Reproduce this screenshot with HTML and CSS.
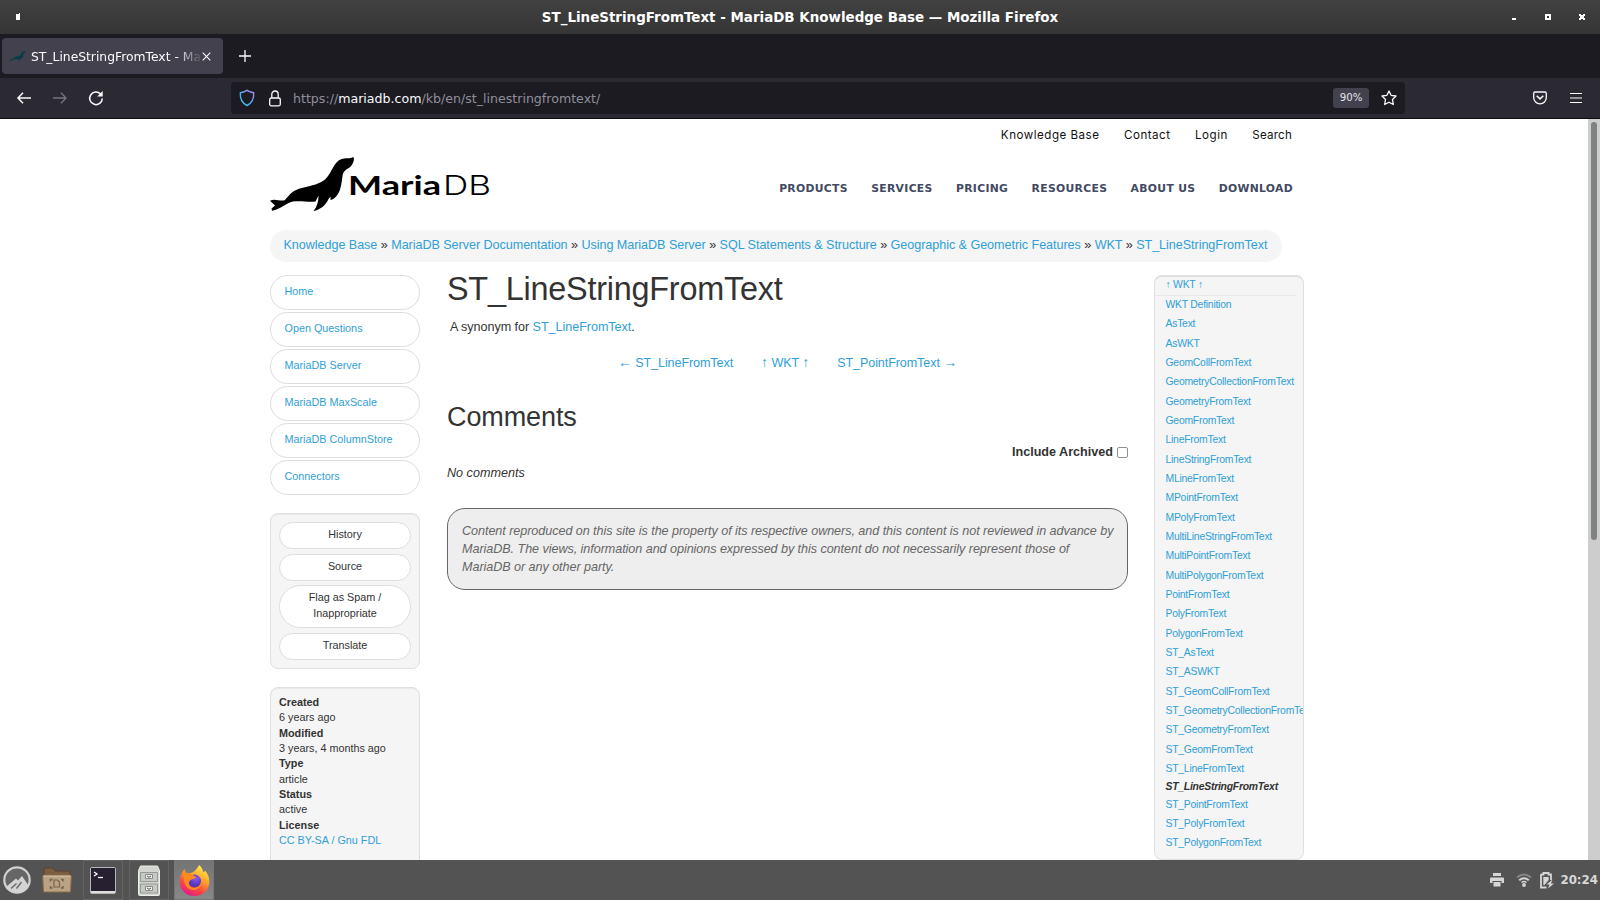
FILE: index.html
```html
<!DOCTYPE html>
<html lang="en">
<head>
<meta charset="utf-8">
<title>ST_LineStringFromText - MariaDB Knowledge Base</title>
<link rel="stylesheet" href="styles.css">
</head>
<body>
<div class="titlebar">
  <svg class="win-mark" width="6" height="10" viewBox="0 0 6 10"><path d="M0 2h3V1h1v7H0z" fill="#fff"/></svg>
  <span class="win-title">ST_LineStringFromText - MariaDB Knowledge Base — Mozilla Firefox</span>
  <svg class="win-buttons" width="73" height="8" viewBox="0 0 73 8"><path d="M0 5h4v2H0zM33 1h6v6h-6zM67 1h2v1h2V1h2v2h-1v2h1v2h-2V6h-2v1h-2V5h1V3h-1z" fill="#fff"/><path d="M35 3h2v2h-2z" fill="#3a3a3a"/></svg>
</div>
<div class="tabs">
  <div class="tab">
    <svg class="favicon" width="16" height="12" viewBox="0 0 87 56"><use href="#seal" fill="#0a3a4a"/></svg>
    <span class="tab-text">ST_LineStringFromText - MariaDB Kn</span>
    <svg width="9" height="9" viewBox="0 0 9 9"><path d="M.7.7l7.6 7.6M8.3.7L.7 8.3" stroke="#fbfbfe" stroke-width="1.1"/></svg>
  </div>
  <svg class="plus" width="12" height="12" viewBox="0 0 12 12"><path d="M6 0v12M0 6h12" stroke="#fbfbfe" stroke-width="1.3"/></svg>
</div>
<div class="toolbar">
  <svg class="back" width="14" height="12" viewBox="0 0 14 12"><path d="M14 6H1M6 .8L1 6l5 5.2" fill="none" stroke="#fbfbfe" stroke-width="1.5"/></svg>
  <svg class="fwd" width="14" height="12" viewBox="0 0 14 12"><path d="M0 6h13M8 .8L13 6l-5 5.2" fill="none" stroke="#77767f" stroke-width="1.3"/></svg>
  <svg class="reload" width="16" height="16" viewBox="0 0 16 16"><path d="M12.6 4A6.3 6.3 0 1 0 14.3 8.500" fill="none" stroke="#fbfbfe" stroke-width="1.5"/><path d="M14.700 1v5.500H9.200z" fill="#fbfbfe"/></svg>
  <div class="url">
    <svg width="16" height="18" viewBox="0 0 16 18"><defs><linearGradient id="sh" x1="1" y1="0" x2="0" y2="1"><stop offset="0" stop-color="#b088ee"/><stop offset=".5" stop-color="#5ba4e8"/><stop offset="1" stop-color="#1fd5f5"/></linearGradient></defs><path d="M8 1.200C6.500 2.700 3.500 3.400 1.300 3.800C1 9.500 2.400 14 8 16.500C13.600 14 15 9.500 14.700 3.800C12.500 3.400 9.500 2.700 8 1.200z" fill="none" stroke="url(#sh)" stroke-width="1.400"/></svg>
    <svg class="lock" width="12" height="17" viewBox="0 0 12 17"><rect x=".7" y="8" width="10.600" height="7.800" rx="1.500" fill="none" stroke="#fbfbfe" stroke-width="1.300"/><path d="M2.800 7.800V4.200a3.200 3.200 0 0 1 6.400 0v3.600" fill="none" stroke="#fbfbfe" stroke-width="1.300"/></svg>
    <span class="addr">https://<b>mariadb.com</b>/kb/en/st_linestringfromtext/</span>
    <span class="zoom">90%</span>
    <svg class="star" width="16" height="16" viewBox="0 0 16 16"><path d="M8 1l2.100 4.300 4.900.7-3.500 3.500.8 5L8 12.200 3.700 14.500l.8-5L1 6l4.900-.7z" fill="none" stroke="#fbfbfe" stroke-width="1.300" stroke-linejoin="round"/></svg>
  </div>
  <svg class="pocket" width="14" height="14" viewBox="0 0 14 14"><path d="M2 1h10q1.300 0 1.300 1.300V6.500a6.300 6.300 0 0 1-12.600 0V2.300Q.7 1 2 1z" fill="none" stroke="#fbfbfe" stroke-width="1.300"/><path d="M3.700 4.700L7 7.900l3.300-3.200" fill="none" stroke="#fbfbfe" stroke-width="1.500"/></svg>
  <svg class="menu" width="12" height="10" viewBox="0 0 12 10"><path d="M0 .5h12M0 5h12M0 9.500h12" stroke="#fbfbfe" stroke-width="1.2"/></svg>
</div>
<div class="viewport">
  <div class="page">
    <div class="topnav"><span>Knowledge Base</span><span>Contact</span><span>Login</span><span class="tight">Search</span></div>
    <div class="header">
      <svg class="logo" width="220" height="56" viewBox="0 0 220 56">
        <defs><path id="seal" d="M83.300 1C85 3 83 9 79.500 11.500C75 14 73 16 72.500 20C71.500 28 70.500 34 68 38C65.500 41.500 63 44 60.500 44L60.500 40.500L58.500 43C56 49 50 54 43.500 55C47 51 48.500 45.500 48.500 39.500L45.500 45.500C40 46.500 30 44.500 23 45.500C16 47 11 53 2 54.800L1.500 52.500L5 49.500L0 44.800C5 42 11 46 15 44C20 38 23 34 32 32C42 29.500 50 28 56 22.500C62 16 64 6 71 3.200C76 1.500 80 3 83.300 1z"/></defs>
        <use href="#seal" fill="#000"/>
        <text x="78" y="39" class="maria" textLength="93" lengthAdjust="spacingAndGlyphs">Maria</text>
        <text x="173" y="39" class="db" textLength="48" lengthAdjust="spacingAndGlyphs">DB</text>
      </svg>
      <div class="nav"><span>PRODUCTS</span><span>SERVICES</span><span>PRICING</span><span>RESOURCES</span><span>ABOUT US</span><span>DOWNLOAD</span></div>
    </div>
    <div class="crumbs"><a>Knowledge Base</a> » <a>MariaDB Server Documentation</a> » <a>Using MariaDB Server</a> » <a>SQL Statements &amp; Structure</a> » <a>Geographic &amp; Geometric Features</a> » <a>WKT</a> » <a>ST_LineStringFromText</a></div>
    <div class="columns">
      <div class="left">
        <div class="pills"><a>Home</a><a>Open Questions</a><a>MariaDB Server</a><a>MariaDB MaxScale</a><a>MariaDB ColumnStore</a><a>Connectors</a></div>
        <div class="panel actions"><span>History</span><span>Source</span><span class="two">Flag as Spam /<br>Inappropriate</span><span>Translate</span></div>
        <div class="panel info"><b>Created</b><span>6 years ago</span><b>Modified</b><span>3 years, 4 months ago</span><b>Type</b><span>article</span><b>Status</b><span>active</span><b>License</b><a>CC BY-SA / Gnu FDL</a></div>
      </div>
      <div class="main">
        <h1>ST_LineStringFromText</h1>
        <p class="syn">A synonym for <a>ST_LineFromText</a>.</p>
        <div class="pager"><a><i>←</i> ST_LineFromText</a><a><i>↑</i> WKT <i>↑</i></a><a>ST_PointFromText <i>→</i></a></div>
        <h2>Comments</h2>
        <div class="archived"><b>Include Archived</b><i class="check"></i></div>
        <p class="none">No comments</p>
        <div class="notice"><span>Content reproduced on this site is the property of its respective owners, and this content is not reviewed in advance by</span><span>MariaDB. The views, information and opinions expressed by this content do not necessarily represent those of</span><span>MariaDB or any other party.</span></div>
      </div>
      <div class="right">
        <a class="up">↑ WKT ↑</a>
        <a>WKT Definition</a><a>AsText</a><a>AsWKT</a><a>GeomCollFromText</a><a>GeometryCollectionFromText</a><a>GeometryFromText</a><a>GeomFromText</a><a>LineFromText</a><a>LineStringFromText</a><a>MLineFromText</a><a>MPointFromText</a><a>MPolyFromText</a><a>MultiLineStringFromText</a><a>MultiPointFromText</a><a>MultiPolygonFromText</a><a>PointFromText</a><a>PolyFromText</a><a>PolygonFromText</a><a>ST_AsText</a><a>ST_ASWKT</a><a>ST_GeomCollFromText</a><a>ST_GeometryCollectionFromText</a><a>ST_GeometryFromText</a><a>ST_GeomFromText</a><a>ST_LineFromText</a><b>ST_LineStringFromText</b><a>ST_PointFromText</a><a>ST_PolyFromText</a><a>ST_PolygonFromText</a>
      </div>
    </div>
  </div>
  <div class="scroll"><div class="thumb"></div></div>
</div>
<div class="taskbar">
  <svg class="launch" width="28" height="28" viewBox="0 0 28 28"><circle cx="14" cy="14" r="12.700" fill="#666" stroke="#d0d0d0" stroke-width="2.200"/><path d="M3.500 20.500L13 12.500L15 14.500L19 10L25.500 19.500C23 25 18 27 14 27C9 27 5.500 24.500 3.500 20.500z" fill="#d4d4d4"/><path d="M8 22.500L13.500 17.500M13.500 22.500L18.500 16" stroke="#666" stroke-width="1.300"/></svg>
  <svg class="folder" width="30" height="26" viewBox="0 0 30 26"><path d="M2 9V3q0-2 2-2h7l2 3h13q2 0 2 2v4z" fill="#7c5d3f" stroke="#594330"/><path d="M.7 9.500q0-1.500 1.500-1.500h25.600q1.500 0 1.500 1.500L28.500 25h-27z" fill="#b9a384" stroke="#886a48"/><path d="M1.500 9.200h27" stroke="#d5c2a6"/><path d="M12 13h3.500l2 2v5h-5.500z" fill="none" stroke="#77634d" stroke-width="1.200"/><path d="M8.500 14.500v-2h2M8.500 19v2h2M21 14.500v-2h-2M21 19v2h-2" fill="none" stroke="#77634d" stroke-width="1.500"/></svg>
  <div class="task"><svg width="26" height="27" viewBox="0 0 26 27"><rect x=".5" y=".5" width="25" height="26" rx="1.500" fill="#dededc" stroke="#b5b5b5"/><rect x="1" y="1" width="24" height="23" fill="#262031"/><path d="M4 5l3 2-3 2" fill="none" stroke="#fff" stroke-width="1.300"/><path d="M8 10.500h5" stroke="#fff" stroke-width="1.300"/></svg></div>
  <div class="task"><svg width="22" height="31" viewBox="0 0 22 31"><path d="M2.500 1h17L21.500 5.500v24q0 1-1 1h-19q-1 0-1-1v-24z" fill="#d2d5d0" stroke="#eceeea"/><path d="M2.500 7.500h17v9h-17zM2.500 19h17v9h-17z" fill="#c6cac4" stroke="#979a94"/><path d="M7.500 9.500h7v4h-7zM7.500 21.500h7v4h-7z" fill="#eee" stroke="#888"/><path d="M9 11l2 1.300 2-1.300M9 23l2 1.300 2-1.300" fill="none" stroke="#555"/></svg></div>
  <div class="task active"><svg width="31" height="33" viewBox="0 0 31 33"><defs><linearGradient id="fx" x1=".8" y1="0" x2=".3" y2="1"><stop offset="0" stop-color="#fff44f"/><stop offset=".4" stop-color="#ffa52c"/><stop offset=".7" stop-color="#ff4a3d"/><stop offset="1" stop-color="#e31587"/></linearGradient><radialGradient id="gl" cx=".6" cy=".3"><stop offset="0" stop-color="#9059ff"/><stop offset="1" stop-color="#5438b5"/></radialGradient></defs><path d="M20 1C23 3.500 24 6 24 8L26.500 7C29 10 30.500 14 30.300 18C30 26 23.500 32 15.500 32C7 32 .8 26 .8 17.500C.8 13 2.500 9 5.500 5L6.500 9L11 9C14 9.500 18 5 20 1z" fill="url(#fx)"/><circle cx="15.500" cy="17" r="6.500" fill="url(#gl)"/><path d="M5.500 5L7 8.500L11 9.500L17 13C16 15.500 13 14.500 11 16.500C9 18.500 9.500 22 13 23.500C17 25 20 22 22 21C19 27 11 28 7 22C4 17 4 11 5.500 5z" fill="#ff8a20"/></svg></div>
  <div class="tray">
    <svg width="14" height="14" viewBox="0 0 14 14"><path d="M3 0h8v3H3zM1 4.500h12q1 0 1 1V10h-2.500V8h-9v2H0V5.500q0-1 1-1zM3.500 9h7v4.500h-7z" fill="#d6d6d6"/></svg>
    <svg class="wifi" width="16" height="14" viewBox="0 0 16 14"><path d="M1 4.500Q8-1.500 15 4.500" fill="none" stroke="#858585" stroke-width="2"/><path d="M3.200 7.300Q8 3 12.800 7.300" fill="none" stroke="#d6d6d6" stroke-width="1.900"/><path d="M5.500 9.500Q8 7.500 10.500 9.500" fill="none" stroke="#d6d6d6" stroke-width="1.500"/><circle cx="8" cy="12" r="1.900" fill="#d6d6d6"/></svg>
    <svg class="batt" width="14" height="17" viewBox="0 0 14 17"><path d="M1 2.500h2.500V1h5v1.500H11V8M1 2V15.500h5.500" fill="none" stroke="#d6d6d6" stroke-width="1.800"/><path d="M3.300 5h5.400v3L4.500 13H3.300z" fill="#d6d6d6"/><path d="M12.500 7.500L6.500 12.500h3L8 16.500l6-5h-3z" fill="#d6d6d6"/></svg>
    <span class="clock">20:24</span>
  </div>
</div>
</body>
</html>
```
FILE: styles.css
```css
* { box-sizing: border-box; }
body { margin: 0; width: 1600px; height: 900px; overflow: hidden; display: flex; flex-direction: column; background: #fff; font-family: "DejaVu Sans", sans-serif; }
svg { display: block; flex: none; overflow: visible; }
span, a, b { white-space: nowrap; }
.titlebar { height: 34px; flex: none; background: linear-gradient(#414141, #353535); display: flex; align-items: center; justify-content: space-between; padding: 0 15px 0 16px; }
.win-title { color: #fff; font-weight: bold; font-size: 13.45px; margin-left: 66px; }
.tabs { height: 44px; flex: none; background: #1c1b22; display: flex; align-items: center; padding-left: 2px; }
.tab { width: 221px; height: 36px; border-radius: 4px; background: #42414d; display: flex; align-items: center; padding-left: 8px; }
.favicon { margin-right: 5px; }
.tab-text { width: 169px; overflow: hidden; font-size: 12.33px; color: #fbfbfe; margin-right: 2px; padding-top: 1px; -webkit-mask-image: linear-gradient(90deg, #000 145px, transparent 172px); mask-image: linear-gradient(90deg, #000 145px, transparent 172px); }
.plus { margin-left: 16px; }
.toolbar { height: 41px; flex: none; background: #2b2a33; border-bottom: 1px solid #0c0c0d; display: flex; align-items: center; padding-left: 17px; }
.fwd { margin-left: 22px; }
.reload { margin-left: 21px; }
.url { margin-left: 127px; width: 1174px; height: 32px; border-radius: 4px; background: #1c1b22; display: flex; align-items: center; padding-left: 8px; }
.lock { margin-left: 14px; }
.addr { margin-left: 12px; width: 1040px; font-size: 12.6px; padding-top: 1px; color: #8f8f99; }
.addr b { color: #fbfbfe; font-weight: normal; }
.zoom { width: 36px; height: 20px; border-radius: 3px; background: #42414d; color: #e4e4ea; font-size: 10.2px; line-height: 20px; text-align: center; }
.star { margin-left: 12px; }
.pocket { margin-left: 128px; }
.menu { margin-left: 23px; }
.viewport { height: 741px; flex: none; overflow: hidden; display: flex; justify-content: space-between; }
.page { margin-left: 270px; width: 1034px; font-family: "Liberation Sans", Arial, sans-serif; font-size: 12.6px; color: #333; }
.page a { color: #2fa0d8; }
.topnav { height: 32px; display: flex; justify-content: flex-end; align-items: center; gap: 24.5px; padding-right: 12px; font-family: Inter, sans-serif; font-size: 11.6px; letter-spacing: .5px; color: #111; }
.topnav .tight { letter-spacing: .2px; }
.header { height: 79px; display: flex; justify-content: space-between; padding-top: 5px; }
.maria { font: 700 27px Lato, sans-serif; }
.db { font: 300 27px Inter, sans-serif; }
.nav { display: flex; gap: 23.3px; padding-right: 11px; height: 64px; align-items: center; font-family: "DejaVu Sans", sans-serif; font-weight: bold; font-size: 10.8px; letter-spacing: .32px; color: #424a63; }
.crumbs { width: 1012px; height: 32px; border-radius: 16px; background: #f5f5f5; line-height: 30px; padding-left: 13.5px; white-space: nowrap; letter-spacing: -.05px; }
.columns { display: flex; padding-top: 13px; }
.left { width: 150px; font-size: 10.8px; }
.pills { display: flex; flex-direction: column; gap: 2px; }
.pills a { height: 35px; border: 1px solid #ddd; border-radius: 18px; line-height: 31px; padding-left: 13.5px; }
.panel { background: #f5f5f5; border: 1px solid #e0e0e0; border-radius: 8px; box-shadow: inset 0 1px 1px rgba(0,0,0,.05); display: flex; flex-direction: column; }
.actions { margin-top: 18px; height: 156px; padding: 8px; gap: 5px; }
.actions span { height: 27px; border: 1px solid #ddd; border-radius: 22px; background: #fff; text-align: center; line-height: 23px; }
.actions .two { height: 43px; line-height: 16px; padding-top: 3px; margin-top: -1px; }
.info { margin-top: 18px; height: 190px; padding: 7px 8px; line-height: 15.35px; }
.main { width: 681px; margin-left: 27px; }
h1 { margin: 0; font-weight: normal; font-size: 32.4px; letter-spacing: -.23px; line-height: 36px; margin-top: -4px; }
p { margin: 0; }
.syn { padding: 11px 0 0 3px; line-height: 18px; letter-spacing: -.05px; }
.pager { display: flex; gap: 28px; justify-content: center; padding: 18px 0 0; line-height: 18px; letter-spacing: -.1px; }
.pager i { font-style: normal; font-size: 14px; line-height: 1; }
h2 { margin: 30px 0 0; font-weight: normal; font-size: 27px; letter-spacing: -.1px; line-height: 30px; }
.archived { display: flex; justify-content: flex-end; align-items: center; gap: 4px; margin-top: 11px; height: 18px; }
.check { width: 11px; height: 11px; border: 1px solid #8f8f9d; border-radius: 2px; }
.none { font-style: italic; line-height: 18px; margin-top: 3px; }
.notice { margin-top: 26px; height: 82px; border: 1px solid #666; border-radius: 18px; background: #eee; color: #666; font-style: italic; line-height: 18px; letter-spacing: -.055px; padding: 13px 14px; display: flex; flex-direction: column; }
.right { margin-left: 26px; width: 150px; height: 585px; border: 1px solid #e0e0e0; border-top-width: 2px; border-radius: 8px; background: #f5f5f5; overflow: hidden; font-size: 10.4px; letter-spacing: -.24px; display: flex; flex-direction: column; }
.right a, .right b { padding-left: 10.5px; height: 19.33px; line-height: 17px; flex: none; }
.right .up { height: 19px; line-height: 15px; border-bottom: 1px solid #e8e8e8; width: 141px; }
.right b { height: 16.5px; line-height: 15px; font-style: italic; }
.scroll { width: 12px; background: #cdcdcd; padding: 3px; }
.thumb { width: 6px; height: 418px; border-radius: 3px; background: #7e8280; }
.taskbar { height: 40px; flex: none; background: #535353; display: flex; align-items: center; }
.launch { margin-left: 3px; }
.folder { margin: 0 11px; }
.task { width: 40px; height: 40px; border: 1px solid #646464; display: flex; align-items: center; justify-content: center; margin-right: 6px; }
.active { background: linear-gradient(#747474, #888); border-color: #777; margin-left: -1px; }
.tray { margin-left: auto; display: flex; align-items: center; padding-right: 2px; }
.wifi { margin-left: 12px; }
.batt { margin-left: 8px; }
.clock { margin-left: 6px; color: #d8d8d8; font-weight: bold; font-size: 11.8px; }
```
